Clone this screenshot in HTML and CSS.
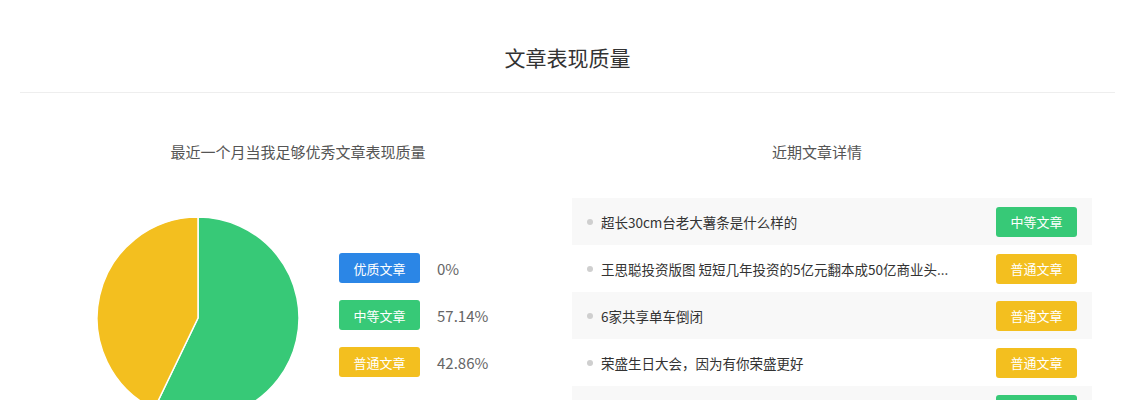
FILE: index.html
```html
<!DOCTYPE html>
<html lang="zh-CN">
<head>
<meta charset="utf-8">
<title>文章表现质量</title>
<link rel="stylesheet" href="styles.css">
</head>
<body>
<div class="page">
  <div class="header">
    <h1 class="title">文章表现质量</h1>
  </div>
  <div class="main">
    <div class="col-left">
      <div class="subtitle sub-left">最近一个月当我足够优秀文章表现质量</div>
      <div class="chart">
        <svg class="pie" width="204" height="204" viewBox="0 0 204 204">
          <path d="M102,102 L102,1 A101,101 0 1 1 58.2,193.0 Z" fill="#37c977" stroke="#fff" stroke-width="1.5" stroke-linejoin="round"/>
          <path d="M102,102 L58.2,193.0 A101,101 0 0 1 102,1 Z" fill="#f3bf1f" stroke="#fff" stroke-width="1.5" stroke-linejoin="round"/>
        </svg>
        <div class="legend">
          <div class="legend-row"><span class="tag tag-blue">优质文章</span><span class="pct">0%</span></div>
          <div class="legend-row"><span class="tag tag-green">中等文章</span><span class="pct">57.14%</span></div>
          <div class="legend-row"><span class="tag tag-yellow">普通文章</span><span class="pct">42.86%</span></div>
        </div>
      </div>
    </div>
    <div class="col-right">
      <div class="subtitle sub-right">近期文章详情</div>
      <ul class="list">
        <li class="item"><span class="dot"></span><span class="item-text">超长30cm台老大薯条是什么样的</span><span class="tag tag-green">中等文章</span></li>
        <li class="item"><span class="dot"></span><span class="item-text">王思聪投资版图 短短几年投资的5亿元翻本成50亿商业头...</span><span class="tag tag-yellow">普通文章</span></li>
        <li class="item"><span class="dot"></span><span class="item-text">6家共享单车倒闭</span><span class="tag tag-yellow">普通文章</span></li>
        <li class="item"><span class="dot"></span><span class="item-text">荣盛生日大会，因为有你荣盛更好</span><span class="tag tag-yellow">普通文章</span></li>
        <li class="item"><span class="dot"></span><span class="item-text">夏日出游必备清单</span><span class="tag tag-green">中等文章</span></li>
      </ul>
    </div>
  </div>
</div>
</body>
</html>
```

FILE: styles.css
```css
* { box-sizing: border-box; }
html, body { margin: 0; padding: 0; background: #fff; }
body {
  font-family: "Noto Sans CJK SC", "Noto Sans", "Liberation Sans", sans-serif;
  color: #333;
  overflow: hidden;
}
.page { width: 1134px; }
.header {
  margin: 0 19px 0 20px;
  padding-top: 40px;
  height: 93px;
  border-bottom: 1px solid #eeeeee;
}
.title {
  margin: 0;
  font-size: 21px;
  font-weight: normal;
  line-height: 34px;
  text-align: center;
  color: #333;
}
.main {
  display: flex;
  padding: 40px 0 0 20px;
}
.col-left { width: 552px; }
.col-right { width: 520px; }
.subtitle {
  font-size: 15px;
  line-height: 38px;
  color: #555;
  text-align: center;
}
.sub-left { padding-left: 4px; }
.sub-right { padding-right: 30px; }
.chart {
  display: flex;
  align-items: flex-start;
  margin-top: 45px;
  padding-left: 76px;
}
.pie { display: block; flex: none; }
.legend {
  display: flex;
  flex-direction: column;
  gap: 17px;
  margin-left: 39px;
  margin-top: 37px;
}
.legend-row {
  display: flex;
  align-items: center;
}
.tag {
  display: inline-flex;
  align-items: center;
  justify-content: center;
  flex: none;
  width: 81px;
  height: 30px;
  border-radius: 3px;
  color: #fff;
  font-size: 13px;
}
.tag-blue { background: #2b86e6; }
.tag-green { background: #37c977; }
.tag-yellow { background: #f3bf1f; }
.pct {
  margin-left: 17px;
  font-size: 15px;
  color: #666;
}
.list {
  list-style: none;
  margin: 27px 0 0 0;
  padding: 0;
}
.item {
  display: flex;
  align-items: center;
  height: 47px;
  padding: 0 15px 0 15px;
}
.item:nth-child(odd) { background: #f8f8f8; }
.dot {
  flex: none;
  width: 6px;
  height: 6px;
  border-radius: 50%;
  background: #cfcfcf;
  margin-right: 8px;
}
.item-text {
  flex: 1;
  min-width: 0;
  font-size: 13.5px;
  color: #333;
  white-space: nowrap;
  overflow: hidden;
  text-overflow: ellipsis;
}
```
